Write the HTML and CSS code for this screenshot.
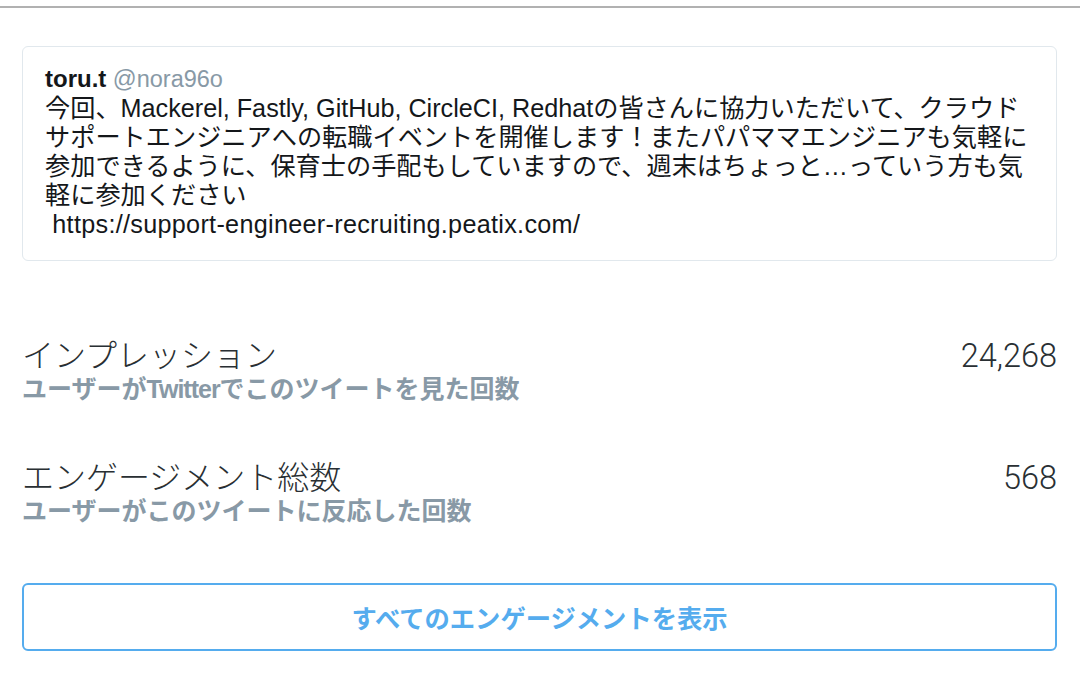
FILE: index.html
```html
<!DOCTYPE html>
<html lang="ja">
<head>
<meta charset="utf-8">
<link rel="stylesheet" href="styles.css">
</head>
<body>
<div class="topline"></div>
<main class="panel">
  <div class="tweet-card">
    <div class="tweet-head"><span class="name">toru.t</span> <span class="handle">@nora96o</span></div>
    <p class="tweet-text">今回、<span class="en">Mackerel, Fastly, GitHub, CircleCI, Redhat</span>の皆さんに協力いただいて、クラウド<br>サポートエンジニアへの転職イベントを開催します！またパパママエンジニアも気軽に<br>参加できるように、保育士の手配もしていますので、週末はちょっと…っていう方も気<br>軽に参加ください<br><span class="en url">&nbsp;https://support-engineer-recruiting.peatix.com/</span></p>
  </div>
  <section class="stats">
    <div class="stat">
      <div class="stat-labels">
        <div class="stat-title">インプレッション</div>
        <div class="stat-desc">ユーザーが<span class="en">Twitter</span>でこのツイートを見た回数</div>
      </div>
      <div class="stat-value">24,268</div>
    </div>
    <div class="stat">
      <div class="stat-labels">
        <div class="stat-title">エンゲージメント総数</div>
        <div class="stat-desc">ユーザーがこのツイートに反応した回数</div>
      </div>
      <div class="stat-value">568</div>
    </div>
  </section>
  <button class="all-btn" type="button">すべてのエンゲージメントを表示</button>
</main>
</body>
</html>
```
FILE: styles.css
```css
html, body {
  margin: 0;
  padding: 0;
  background: #ffffff;
}
body {
  font-family: "Liberation Sans", "Noto Sans CJK JP", sans-serif;
  color: #14171a;
  width: 1080px;
  height: 686px;
  overflow: hidden;
}
.topline {
  margin-top: 6px;
  height: 2px;
  background: #b1b1b1;
}
.panel {
  padding: 38px 23px 0 22px;
}
.tweet-card {
  border: 1px solid #e1e8ed;
  border-radius: 6px;
  padding: 17px 22px 21px 22px;
}
.tweet-head {
  font-size: 23.5px;
  line-height: 30px;
}
.name {
  font-size: 24px;
  font-weight: bold;
  color: #14171a;
}
.handle {
  color: #8899a6;
}
.tweet-text {
  margin: 0;
  font-size: 25.2px;
  line-height: 29px;
  color: #14171a;
  white-space: nowrap;
}
.tweet-text .url {
  letter-spacing: 0.3px;
}
.stats {
  padding-top: 77px;
  margin-bottom: 56px;
}
.stat {
  display: flex;
  justify-content: space-between;
  align-items: baseline;
}
.stat + .stat {
  margin-top: 55px;
}
.stat-title {
  font-size: 32px;
  line-height: 36px;
  font-weight: 300;
  color: #292f33;
}
.stat-desc {
  font-size: 25px;
  line-height: 31px;
  font-weight: bold;
  color: #8899a6;
}
.stat-desc .en {
  letter-spacing: -1px;
}
.stat-value {
  font-family: Roboto, "Liberation Sans", sans-serif;
  font-size: 32.5px;
  line-height: 36px;
  font-weight: 300;
  color: #292f33;
}
.all-btn {
  display: block;
  width: 100%;
  height: 68px;
  padding: 0;
  border: 2px solid #55acee;
  border-radius: 6px;
  background: #ffffff;
  color: #55acee;
  font-family: "Liberation Sans", "Noto Sans CJK JP", sans-serif;
  font-size: 25.3px;
  font-weight: bold;
}
```
